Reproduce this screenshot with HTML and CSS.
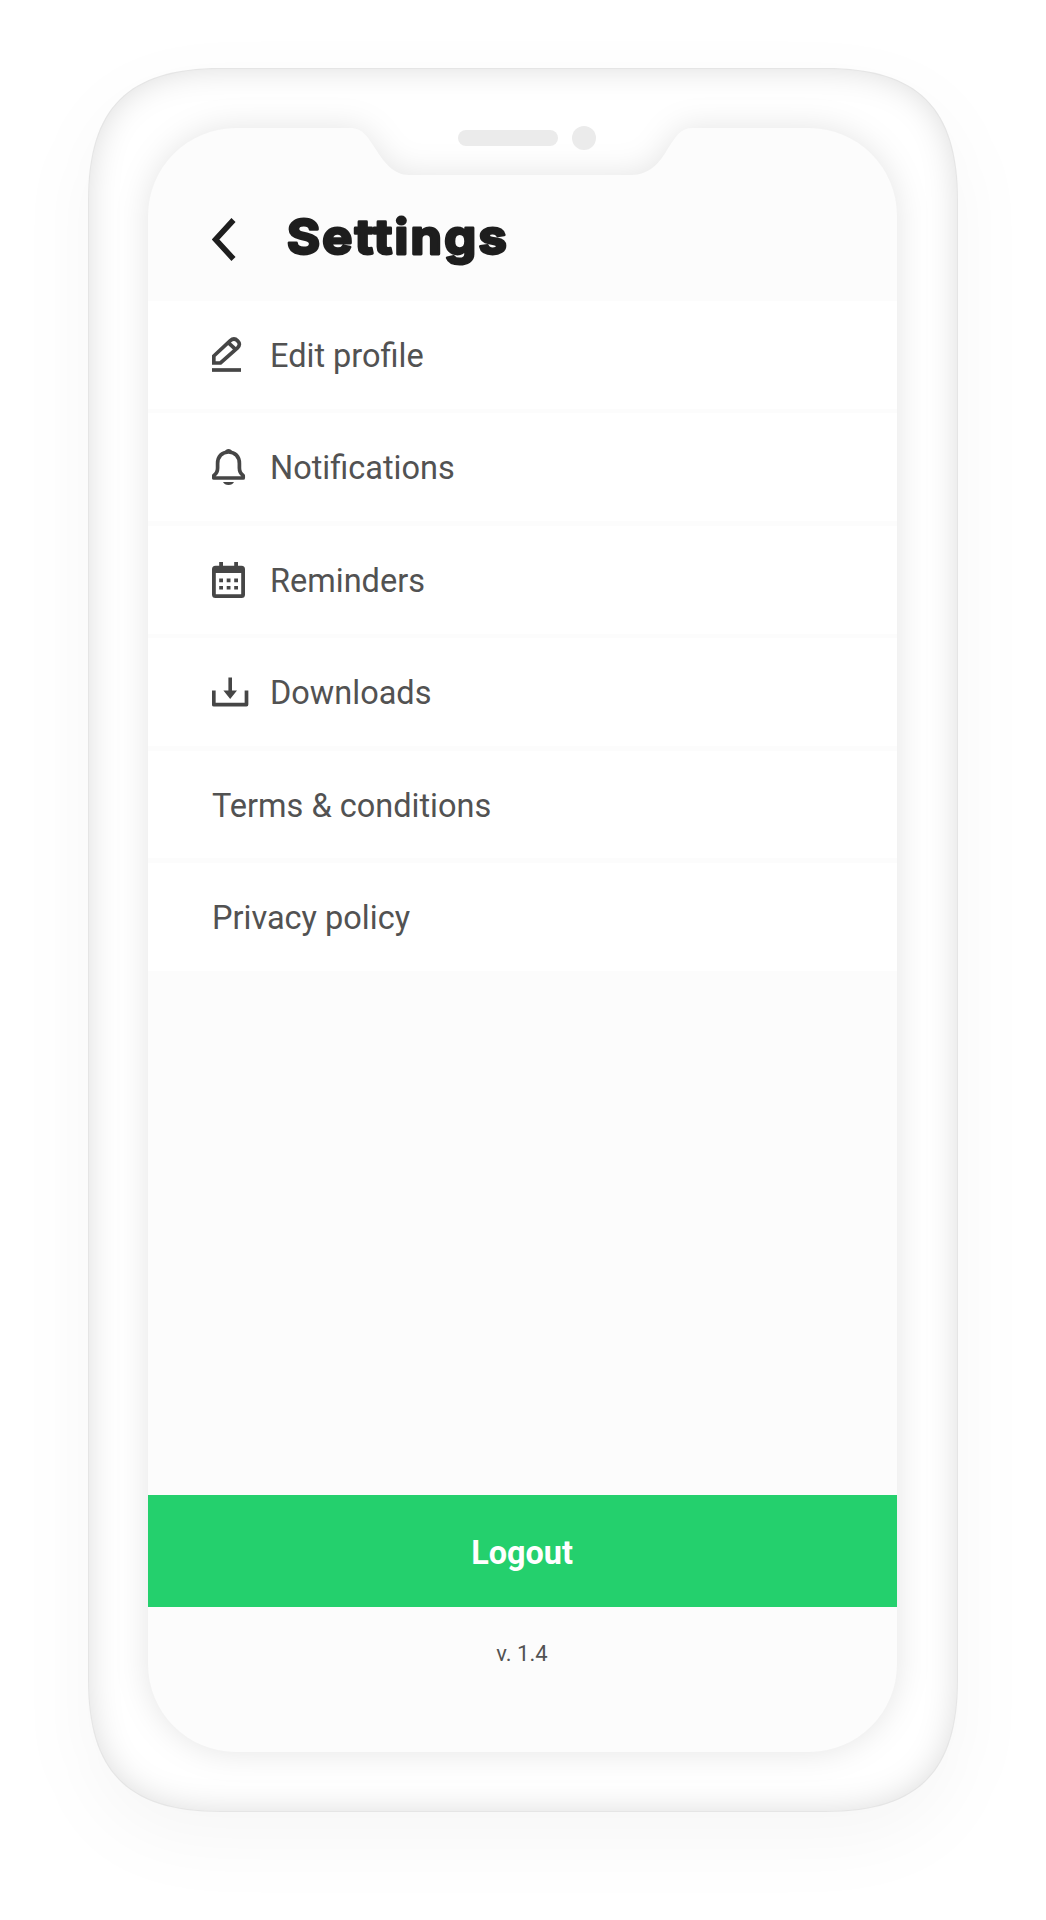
FILE: index.html
```html
<!DOCTYPE html>
<html lang="en">
<head>
<meta charset="utf-8">
<title>Settings</title>
<link rel="stylesheet" href="styles.css">
</head>
<body>
<div class="stage">
  <svg class="device" width="1046" height="1920" viewBox="0 0 1046 1920" aria-hidden="true">
    <defs>
      <path id="shell" d="M220 68H826C918 68 958 108 958 200V1680C958 1772 918 1812 826 1812H220C128 1812 88 1772 88 1680V200C88 108 128 68 220 68Z"/>
      <path id="glass" d="M236 128H350C364 128 368 138 377 151C385 164 395 175 409 175H631C650 175 660 162 667 150C676 136 680 128 693 128H809A88 88 0 0 1 897 216V1664A88 88 0 0 1 809 1752H236A88 88 0 0 1 148 1664V216A88 88 0 0 1 236 128Z"/>
      <clipPath id="shellClip"><use href="#shell"/></clipPath>
      <filter id="soft" filterUnits="userSpaceOnUse" x="0" y="0" width="1046" height="1920"><feGaussianBlur stdDeviation="16"/></filter>
      <filter id="wide" filterUnits="userSpaceOnUse" x="-100" y="-100" width="1246" height="2120"><feGaussianBlur stdDeviation="35"/></filter>
    </defs>
    <use href="#shell" fill="#000" fill-opacity=".035" filter="url(#wide)" transform="translate(0 27)"/>
    <use href="#shell" fill="#fff"/>
    <g clip-path="url(#shellClip)">
      <path d="M-60 -60H1106V1980H-60ZM220 68C128 68 88 108 88 200V1680C88 1772 128 1812 220 1812H826C918 1812 958 1772 958 1680V200C958 108 918 68 826 68Z" fill="#000" fill-opacity=".14" fill-rule="evenodd" filter="url(#soft)"/>
      <use href="#glass" fill="#000" fill-opacity=".105" filter="url(#soft)"/>
      <use href="#shell" fill="none" stroke="#000" stroke-opacity=".03" stroke-width="2"/>
    </g>
    <use href="#glass" fill="#fcfcfc"/>
    <rect x="458" y="130" width="100" height="16" rx="8" fill="#ebebeb"/>
    <circle cx="584" cy="138" r="12" fill="#ebebeb"/>
  </svg>

  <main class="screen">
    <header class="header">
      <svg class="back" width="25" height="44" viewBox="0 0 25 44"><path d="M21.5 2L3.5 21.5L21.5 41"/></svg>
      <h1 class="title">
        <svg width="230" height="80" viewBox="0 0 230 80"><text x="0" y="54" textLength="222" lengthAdjust="spacingAndGlyphs">Settings</text></svg>
      </h1>
    </header>

    <nav class="menu">
      <a class="item">
        <svg class="icon" width="37" height="36" viewBox="0 0 37 36">
          <path d="M1.8 26V19L18.3 3.7Q22 .3 25.6 3.8Q29.2 7.3 25.5 10.8L8.5 26Z"/><path d="M16.5 5.8L23.3 12.2"/><path d="M0 33H29"/>
        </svg>
        <span>Edit profile</span>
      </a>
      <a class="item">
        <svg class="icon" width="37" height="36" viewBox="0 0 37 36">
          <path d="M1.8 29V26.5Q5.6 24 5.6 19V14.5C5.6 7.5 10 3 16.5 3S27.4 7.5 27.4 14.5V19Q27.4 24 31.2 26.5V29Z" stroke-linejoin="round"/><path class="solid" d="M13 2.5Q13.5 0 16.5 0T20 2.5ZM11 33H22Q20.5 36 16.5 36T11 33Z"/>
        </svg>
        <span>Notifications</span>
      </a>
      <a class="item">
        <svg class="icon" width="37" height="36" viewBox="0 0 37 36">
          <path class="solid" fill-rule="evenodd" d="M7.2 0H11V3.8H22.2V0H26V3.8H29.5Q33 3.8 33 7.3V32.5Q33 36 29.5 36H3.5Q0 36 0 32.5V7.3Q0 3.8 3.5 3.8H7.2ZM3.8 11V32.3H29.2V11Z"/>
          <path class="solid" d="M7.2 16.6H11V20.2H7.2ZM14.7 16.6H18.5V20.2H14.7ZM22.2 16.6H26V20.2H22.2ZM7.2 23.9H11V27.5H7.2ZM14.7 23.9H18.5V27.5H14.7ZM22.2 23.9H26V27.5H22.2Z"/>
        </svg>
        <span>Reminders</span>
      </a>
      <a class="item">
        <svg class="icon" width="37" height="36" viewBox="0 0 37 36">
          <path d="M1.8 16.5V30.6H34.5V16.5" stroke-linejoin="round"/><path class="solid" d="M16.4 3.5H20V16.5H25L18.2 25L11.4 16.5H16.4Z"/>
        </svg>
        <span>Downloads</span>
      </a>
      <a class="item"><span>Terms &amp; conditions</span></a>
      <a class="item"><span>Privacy policy</span></a>
    </nav>

    <footer class="footer">
      <button class="logout">Logout</button>
      <p class="version">v. 1.4</p>
    </footer>
  </main>
</div>
</body>
</html>
```

FILE: styles.css
```css
* {
  box-sizing: border-box;
}

body {
  margin: 0;
  background: #fff;
  font-family: Roboto, "Liberation Sans", sans-serif;
  color: #525252;
}

.stage {
  position: relative;
  width: 1046px;
  height: 1920px;
  padding: 128px 149px 168px 148px;
  overflow: hidden;
}

/* Phone body drawn behind the screen content */
.device {
  position: absolute;
  inset: 0;
}

.screen {
  position: relative;
  display: flex;
  flex-direction: column;
  height: 100%;
}

.header {
  display: flex;
  align-items: center;
  gap: 50px;
  height: 173px;
  padding: 50px 0 0 64px;
}

.back {
  fill: none;
  stroke: #1e1e1e;
  stroke-width: 5.6;
}

.title {
  margin: 0;
  height: 80px;
  font: 700 48px/60px Inter, sans-serif;
  letter-spacing: 2.2px;
}

.title svg {
  display: block;
  overflow: visible;
}

/* The rounded outline softens the corners of the letters */
.title text {
  fill: #1e1e1e;
  stroke: #1e1e1e;
  stroke-width: 2.8;
  stroke-linejoin: round;
}

.menu {
  display: flex;
  flex-direction: column;
  gap: 4.5px;
}

.item {
  display: flex;
  align-items: center;
  gap: 21px;
  height: 107.9px;
  padding-left: 64px;
  background: #fff;
  font-size: 32.5px;
  line-height: 38px;
}

.item span {
  padding-top: 2px;
}

.icon {
  fill: none;
  stroke: #464646;
  stroke-width: 3.7;
}

.icon .solid {
  fill: #464646;
  stroke: none;
}

.footer {
  margin-top: auto;
  height: 257.5px;
}

.logout {
  display: block;
  width: 100%;
  height: 112px;
  padding: 4px 1px 0 0;
  border: 0;
  background: #24d06d;
  color: #fff;
  font: 700 32.4px/38px Roboto, sans-serif;
}

.version {
  margin: 34px 1px 0 0;
  font-size: 22px;
  line-height: 26px;
  text-align: center;
}
```
